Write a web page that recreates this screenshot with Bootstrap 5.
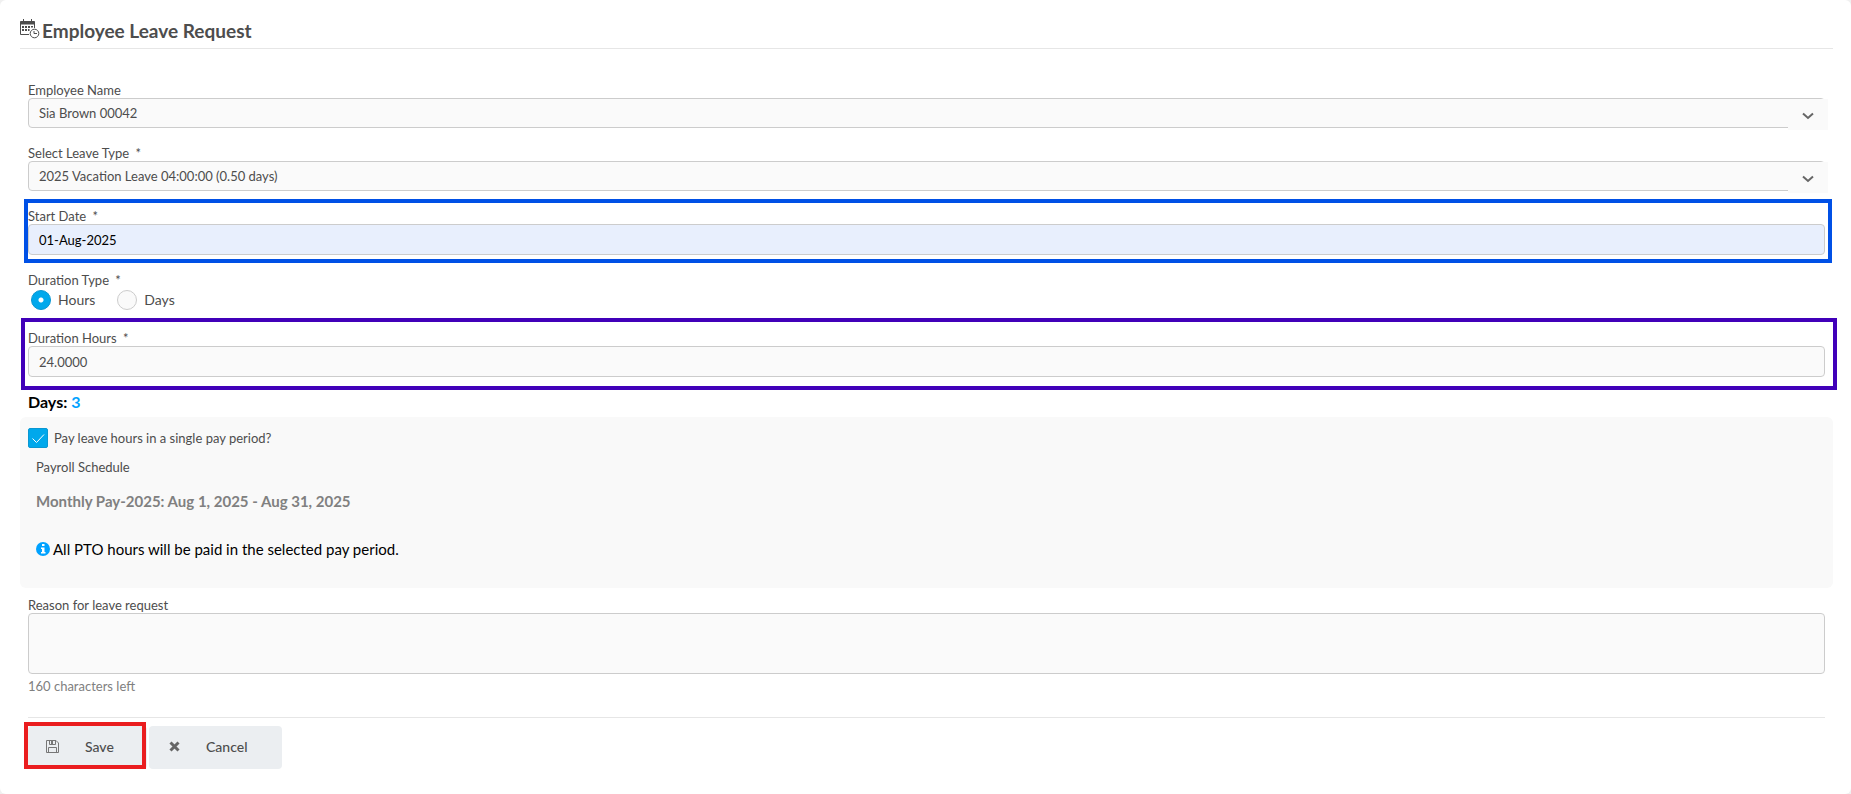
<!DOCTYPE html>
<html lang="en">
<head>
<meta charset="utf-8">
<meta name="viewport" content="width=device-width, initial-scale=1">
<title>Employee Leave Request</title>
<link href="https://cdn.jsdelivr.net/npm/bootstrap@5.3.0/dist/css/bootstrap.min.css" rel="stylesheet">
<style>
  body { font-family: Lato, sans-serif; font-size: 13px; line-height: 20px; color: #4d4d4d; background: #f0f0f0; }
  .sheet { background: #fff; border-radius: 6px; min-height: 100vh; padding: 16px 18px 24px 20px; }
  .sheet-title { font-size: 19px; line-height: 30px; font-weight: 700; }
  .sheet-head { border-bottom: 1px solid #e6e6e6; padding-bottom: 2px; margin-bottom: 29px; gap: 2px; }
  .sheet-icon { margin-top: 3px; }
  .fields { padding: 0 8px; }
  .field { margin-bottom: 13px; }
  .caption { display: block; float: none; font-size: 13px; line-height: 16px; margin: 0; padding-top: 4px; }
  .req { margin-left: 3px; }
  .form-control, .form-select { height: 31px; padding: 0 10px; font-size: 13px; line-height: 18px; color: #4d4d4d; background-color: #fafafa; border: 1px solid #ccc; border-radius: 4px; }
  .form-control.filled { background: #e8effd; color: #000; }
  .form-select { height: 30px; padding-bottom: 1px; background-image: none; }
  .select-cap { position: absolute; top: 1px; right: -3px; width: 40px; height: 31px; background: #fafafa; pointer-events: none; }
  .select-cap svg { position: absolute; left: 14px; top: 13px; }
  .frame { position: absolute; pointer-events: none; border: 4px solid; }
  .frame-date { inset: -5px -7px -8px -4px; border-color: #0050e6; }
  .frame-hours { inset: -8px -12px -13px -7px; border-color: #4100b9; }
  .frame-save { inset: -4px 1px 0 -4px; border-color: #ea1d1f; }
  .choices { margin: 2px 0 0 3px; padding-bottom: 3px; gap: 7px; font-size: 14px; }
  .choices label { margin-right: 15px; }
  .form-check-input, .form-check-input[type=radio], .form-check-input[type=checkbox] { width: 20px; height: 20px; margin: 0; background-color: #fafafa; border: 1px solid #ccc; }
  .form-check-input[type=checkbox] { border-radius: 2px; }
  .form-check-input:checked { background-color: #00a8ec; border-color: #0a97d2; }
  .form-check-input:checked[type=radio] { background-image: radial-gradient(circle, #fff 2px, transparent 3px); }
  .form-check-input:checked[type=checkbox] { background-size: 18px 18px; background-image: url("data:image/svg+xml,%3csvg xmlns='http://www.w3.org/2000/svg' viewBox='0 0 18 18'%3e%3cpath fill='none' stroke='%23fff' d='M3.5 9.5l4 4 7.5-8'/%3e%3c/svg%3e"); }
  .days-line { font-size: 16px; color: #000; padding-top: 2px; margin-bottom: 5px; }
  .heavy { font-weight: 700; }
  .accent { color: #00a2ff; }
  .pay-panel { background: #f9f9f9; border-radius: 6px; padding: 11px 8px 29px; margin-bottom: 5px; }
  .pay-check { gap: 6px; }
  .pay-body { padding: 9px 8px 0; }
  .period { font-size: 15px; color: #808080; margin: 14px 0 28px; }
  .note { font-size: 15px; color: #000; gap: 3px; }
  textarea.form-control { height: 61px; min-height: 61px; resize: none; }
  .hint { color: #808080; margin-top: 2px; }
  .actions { border-top: 1px solid #e6e6e6; margin-top: 21px; padding-top: 8px; gap: 2px; }
  .act { min-width: 119px; height: 43px; padding: 0 18px 2px; border: 0; border-radius: 4px; background: #ebeef1; color: #4d4d4d; font-size: 14px; font-weight: 500; display: flex; align-items: center; gap: 26px; }
  .act-wide { min-width: 133px; padding-left: 20px; }
  .act:hover { background: #dfe3e7; }
</style>
</head>
<body>
<main class="sheet">
  <header class="sheet-head d-flex align-items-start">
    <svg width="20" height="20" viewBox="0 -1 20 20" class="sheet-icon" fill="none" stroke="#4d4d4d" aria-hidden="true">
      <path d="M.5 2v12.500h8.500M14.500 2v6"/><path fill="#4d4d4d" d="M.500 1.500h14v2.500h-14z"/><path d="M3.500-1v3M11.500-1v3"/>
      <path fill="#4d4d4d" stroke="none" d="M5 6h2v2H5zM8 6h2v2H8zM11 6h2v1.500h-2zM2 9h2v2H2zM5 9h2v2H5zM2 6h2v2H2zM8 9h1.500v2H8z"/>
      <circle cx="14.500" cy="13.500" r="4.300"/><path d="M14 11V13.500H17"/>
    </svg>
    <h1 class="sheet-title m-0">Employee Leave Request</h1>
  </header>

  <form>
    <div class="fields">
      <div class="field">
        <label class="caption" for="employee">Employee Name</label>
        <div class="position-relative">
          <select id="employee" class="form-select"><option>Sia Brown 00042</option></select>
          <span class="select-cap"><svg width="13" height="9" viewBox="0 0 13 9" fill="none" stroke="#666" stroke-width="2"><path d="M1 1.500l5 4.500 5-4.500"/></svg></span>
        </div>
      </div>
      <div class="field">
        <label class="caption" for="leaveType">Select Leave Type <span class="req">*</span></label>
        <div class="position-relative">
          <select id="leaveType" class="form-select"><option>2025 Vacation Leave 04:00:00 (0.50 days)</option></select>
          <span class="select-cap"><svg width="13" height="9" viewBox="0 0 13 9" fill="none" stroke="#666" stroke-width="2"><path d="M1 1.500l5 4.500 5-4.500"/></svg></span>
        </div>
      </div>
      <div class="field position-relative">
        <label class="caption" for="startDate">Start Date <span class="req">*</span></label>
        <input id="startDate" type="text" class="form-control filled" value="01-Aug-2025">
        <span class="frame frame-date"></span>
      </div>
      <fieldset class="field">
        <legend class="caption">Duration Type <span class="req">*</span></legend>
        <div class="choices d-flex align-items-center">
          <input class="form-check-input" type="radio" name="durationType" id="hours" checked>
          <label for="hours">Hours</label>
          <input class="form-check-input" type="radio" name="durationType" id="days">
          <label for="days">Days</label>
        </div>
      </fieldset>
      <div class="field position-relative">
        <label class="caption" for="durationHours">Duration Hours <span class="req">*</span></label>
        <input id="durationHours" type="text" class="form-control" value="24.0000">
        <span class="frame frame-hours"></span>
      </div>
      <div class="days-line heavy">Days: <span class="accent">3</span></div>
    </div>

    <section class="pay-panel">
      <div class="pay-check d-flex align-items-center">
        <input class="form-check-input" type="checkbox" id="single" checked>
        <label for="single">Pay leave hours in a single pay period?</label>
      </div>
      <div class="pay-body">
        <div>Payroll Schedule</div>
        <div class="period heavy">Monthly Pay-2025: Aug 1, 2025 - Aug 31, 2025</div>
        <div class="note d-flex align-items-center">
          <svg width="14" height="14" viewBox="0 0 14 14" aria-hidden="true"><circle cx="7" cy="7" r="7" fill="#00a2ff"/><path fill="#fff" d="M6 2h2.500v2H6zM5 5.500h3.500v4.500h1v1.500H5V10h1V7H5z"/></svg>
          All PTO hours will be paid in the selected pay period.
        </div>
      </div>
    </section>

    <div class="fields">
      <label for="reason" class="caption">Reason for leave request</label>
      <textarea id="reason" class="form-control"></textarea>
      <div class="hint">160 characters left</div>
      <div class="actions d-flex">
        <div class="position-relative">
          <button type="submit" class="act">
            <svg width="13" height="13" viewBox="0 0 13 13" fill="none" stroke="#777" aria-hidden="true"><path d="M.5.5h9.500l2.500 2.500v9.500H.5zM3.500.5v4h6v-4M2.500 12.500v-5h8v5"/><path fill="#777" stroke="none" d="M5 1h2v3H5z"/></svg>
            Save
          </button>
          <span class="frame frame-save"></span>
        </div>
        <button type="button" class="act act-wide">
          <svg width="11" height="11" viewBox="0 0 11 11" fill="none" stroke="#666" stroke-width="3" aria-hidden="true"><path d="M1.500 1.500l8 8M9.500 1.500l-8 8"/></svg>
          Cancel
        </button>
      </div>
    </div>
  </form>
</main>
<script src="https://cdn.jsdelivr.net/npm/bootstrap@5.3.0/dist/js/bootstrap.bundle.min.js"></script>
</body>
</html>
